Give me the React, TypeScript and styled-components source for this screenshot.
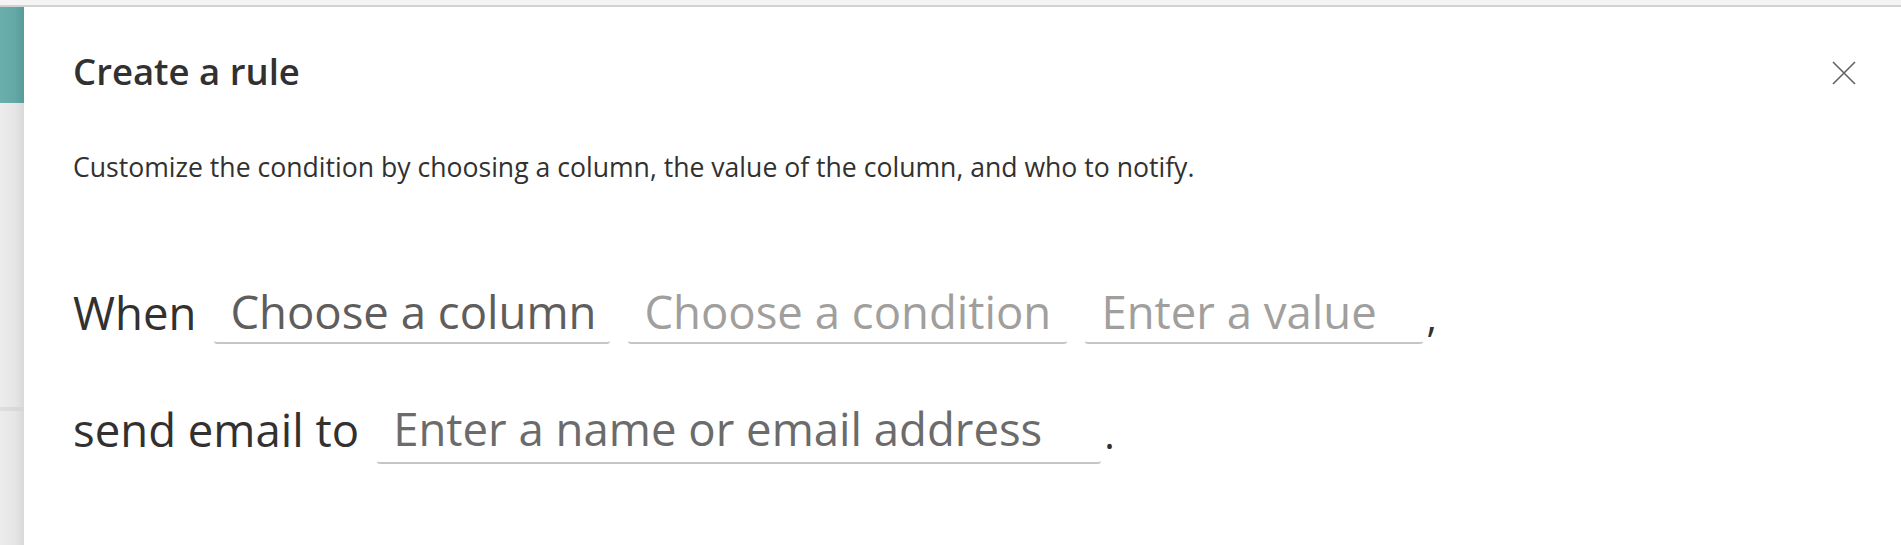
import React from "react";
import styled, { createGlobalStyle } from "styled-components";

const GlobalStyle = createGlobalStyle`
  html, body {
    margin: 0;
    padding: 0;
    background: #ffffff;
  }
  body {
    font-family: "Open Sans", "Noto Sans", "Liberation Sans", sans-serif;
    color: #323130;
  }
`;

const Page = styled.div`
  display: flex;
  flex-direction: column;
  width: 1901px;
  height: 545px;
  overflow: hidden;
`;

const TopBar = styled.div`
  height: 5px;
  flex: none;
  background: #f4f4f4;
  border-bottom: 2px solid #d2d2d2;
`;

const Main = styled.div`
  display: flex;
  flex: 1;
  min-height: 0;
`;

const Backdrop = styled.div`
  width: 24px;
  flex: none;
  display: flex;
  flex-direction: column;
  background: linear-gradient(to right, #ececec 0%, #e6e6e6 60%, #d9d9d9 100%);
`;

const TealBlock = styled.div`
  height: 96px;
  background: linear-gradient(to right, #6aafac 0%, #64a9a6 60%, #589b98 100%);
`;

const BackdropLine = styled.div`
  margin-top: 304px;
  height: 4px;
  background: linear-gradient(to right, #dedede 0%, #d6d6d6 100%);
`;

const Panel = styled.div`
  flex: 1;
  display: flex;
  flex-direction: column;
  background: #ffffff;
  padding: 0 45px 0 49px;
`;

const Header = styled.div`
  display: flex;
  align-items: center;
  justify-content: space-between;
  padding-top: 40px;
`;

const Title = styled.h2`
  margin: 0;
  font-size: 36.5px;
  line-height: 48px;
  font-weight: 600;
  color: #323130;
`;

const CloseButton = styled.button`
  width: 24px;
  height: 24px;
  margin-top: 4px;
  padding: 0;
  border: none;
  background: transparent;
  display: flex;
  align-items: center;
  justify-content: center;
  cursor: pointer;
`;

const Description = styled.p`
  margin: 55px 0 0;
  font-size: 26.6px;
  line-height: 34px;
  color: #323130;
`;

const Sentence = styled.div<{ $top: number }>`
  display: flex;
  align-items: flex-start;
  gap: 18px;
  margin-top: ${(p) => p.$top}px;
`;

const Label = styled.span`
  font-size: 45.5px;
  line-height: 52px;
  color: #323130;
  white-space: nowrap;
`;

const Field = styled.div<{
  $width: number;
  $height: number;
  $tone: "dark" | "mid" | "light";
}>`
  box-sizing: border-box;
  width: ${(p) => p.$width}px;
  height: ${(p) => p.$height}px;
  padding: 0 8px 0 16px;
  font-size: 45.5px;
  line-height: 50px;
  white-space: nowrap;
  color: ${(p) =>
    p.$tone === "dark" ? "#5f5e5c" : p.$tone === "mid" ? "#6b6b6b" : "#a19f9d"};
  border-bottom: 2px solid #c8c6c4;
  border-radius: 0 0 3px 3px;
`;

const Punct = styled.span`
  font-size: 40px;
  line-height: 62px;
  margin-left: -15px;
  color: #323130;
`;

export default function App() {
  return (
    <>
      <GlobalStyle />
      <Page>
        <TopBar />
        <Main>
          <Backdrop>
            <TealBlock />
            <BackdropLine />
          </Backdrop>
          <Panel>
            <Header>
              <Title>Create a rule</Title>
              <CloseButton aria-label="Close">
                <svg width="24" height="24" viewBox="0 0 24 24">
                  <path
                    d="M1 1 L23 23 M23 1 L1 23"
                    stroke="#616161"
                    strokeWidth="1.6"
                    fill="none"
                  />
                </svg>
              </CloseButton>
            </Header>
            <Description>
              Customize the condition by choosing a column, the value of the column, and who to notify.
            </Description>
            <Sentence $top={102}>
              <Label>When</Label>
              <Field $width={396} $height={58} $tone="dark">Choose a column</Field>
              <Field $width={439} $height={58} $tone="light">Choose a condition</Field>
              <Field $width={338} $height={58} $tone="light">Enter a value</Field>
              <Punct>,</Punct>
            </Sentence>
            <Sentence $top={55}>
              <Label>send email to</Label>
              <Field $width={724} $height={61} $tone="mid">Enter a name or email address</Field>
              <Punct>.</Punct>
            </Sentence>
          </Panel>
        </Main>
      </Page>
    </>
  );
}
